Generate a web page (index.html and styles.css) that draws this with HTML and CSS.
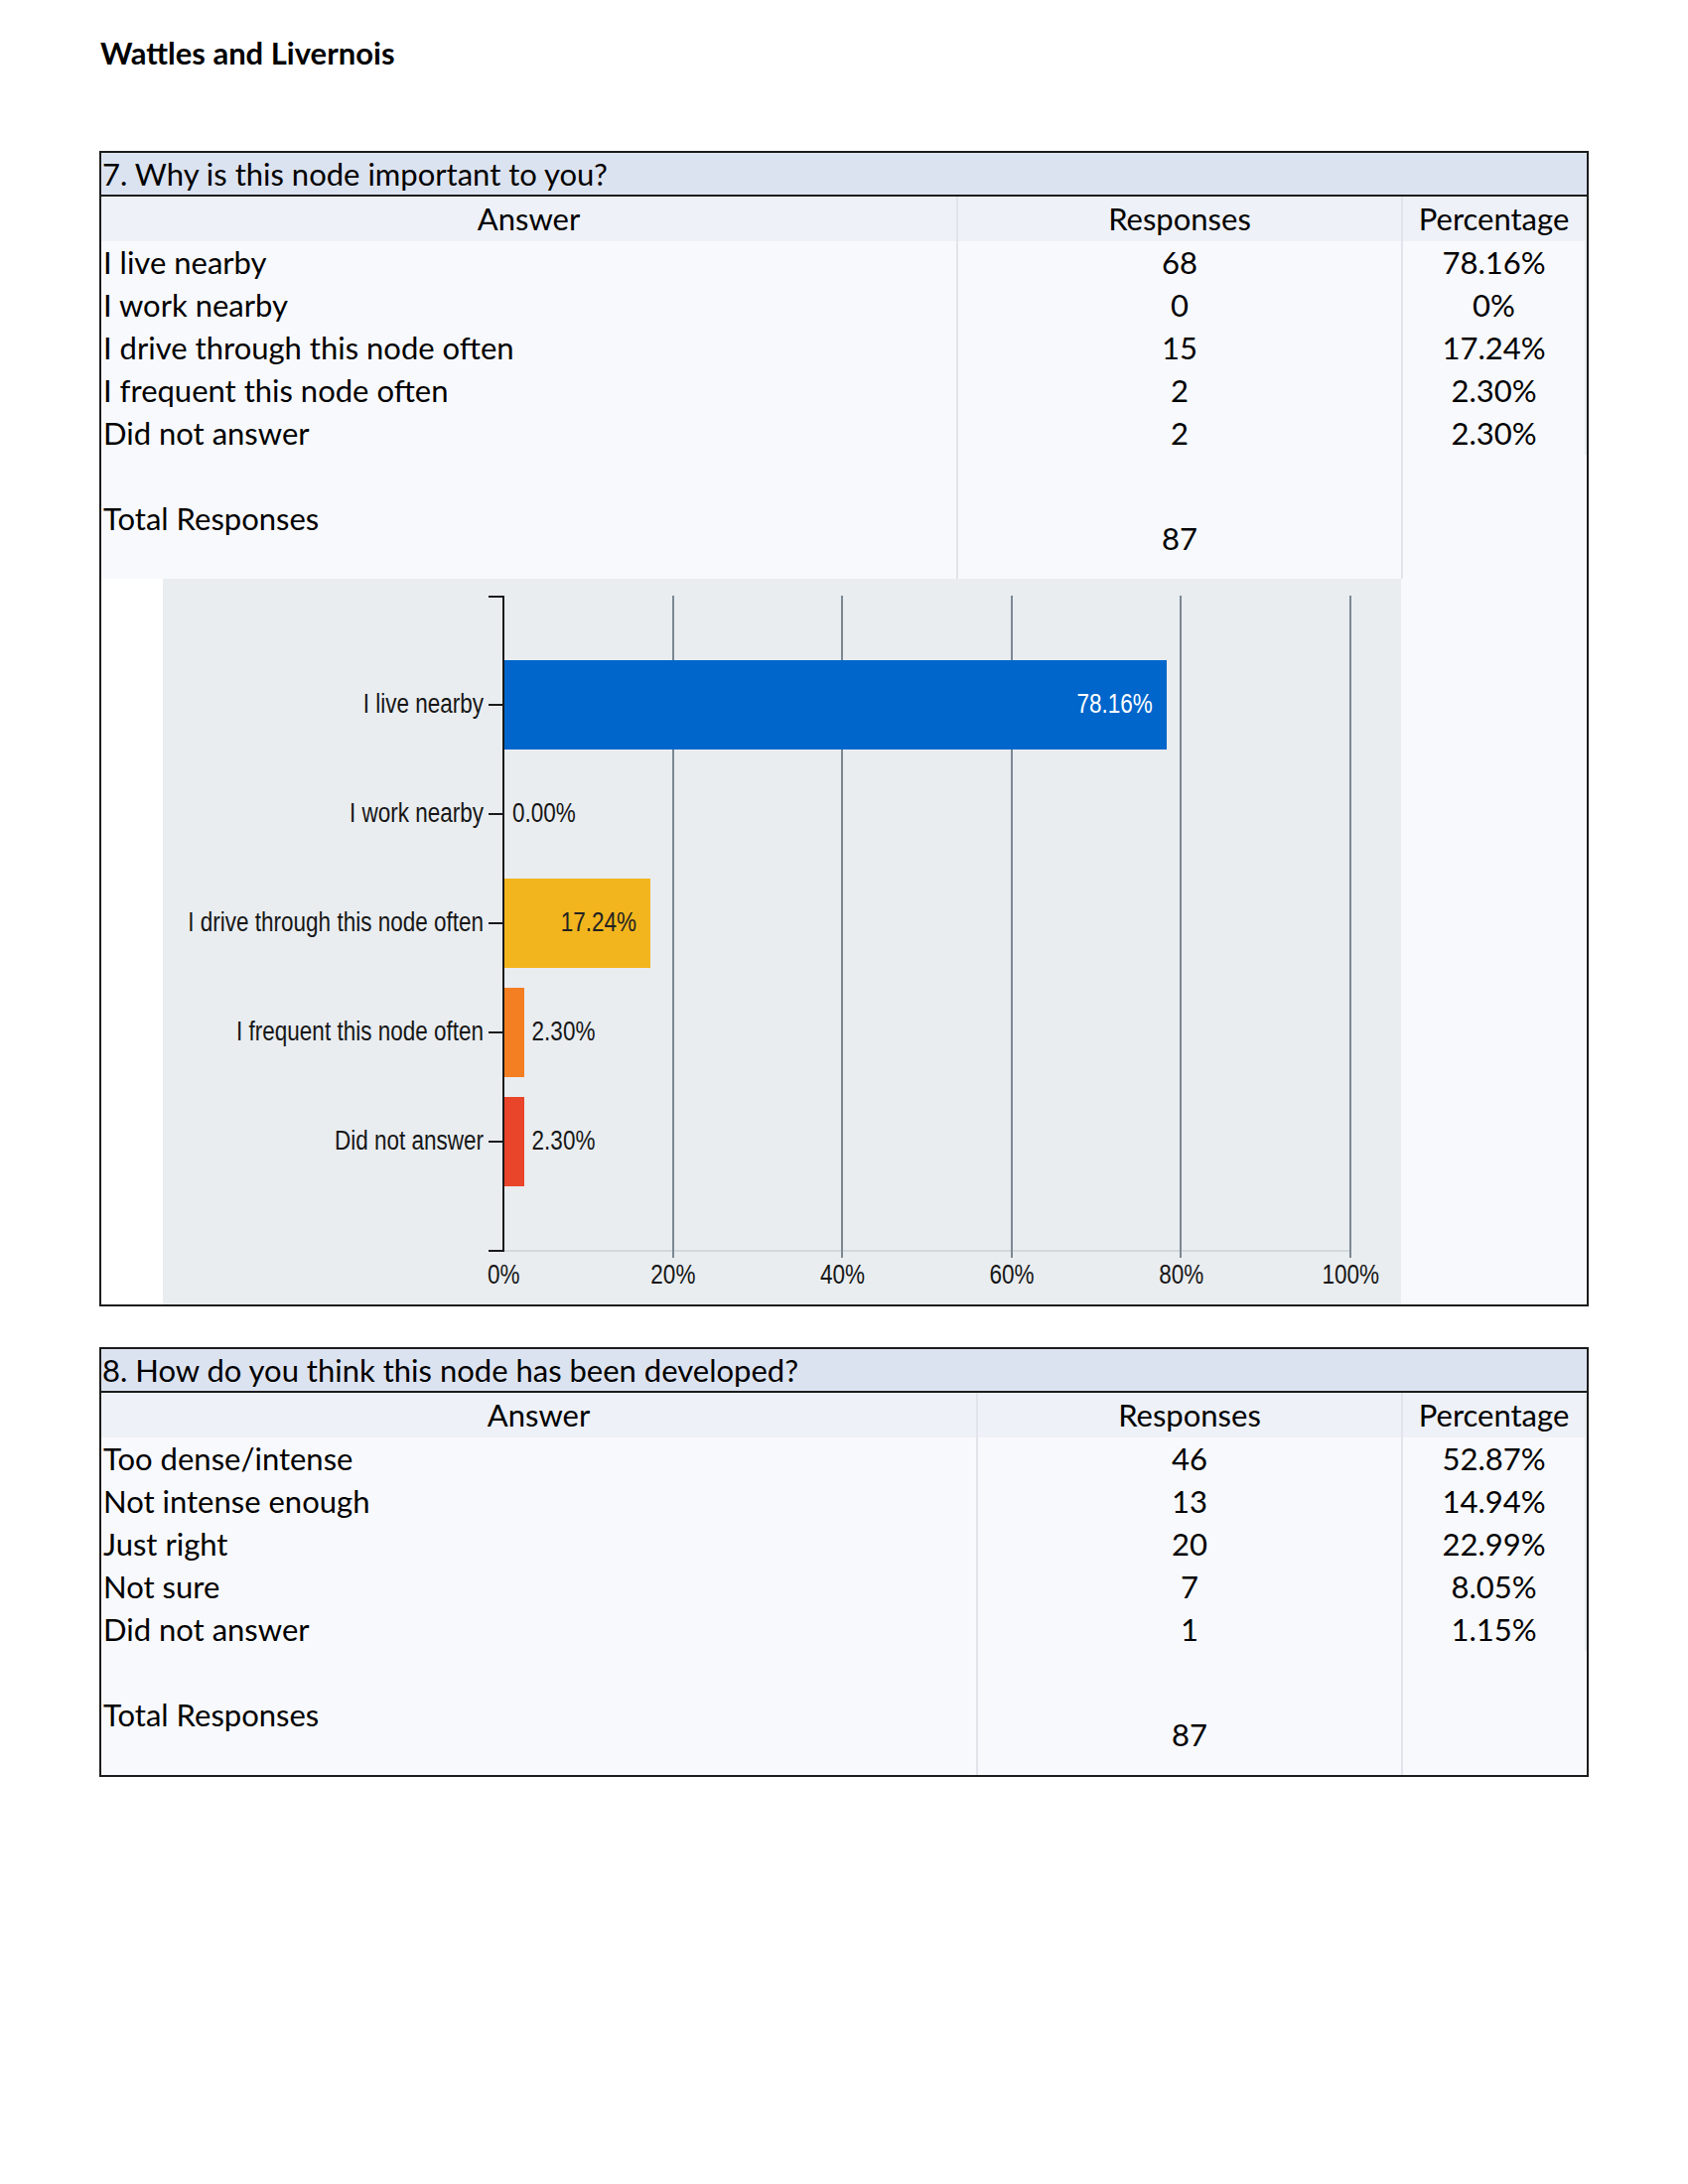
FILE: index.html
```html
<!DOCTYPE html>
<html lang="en">
<head>
<meta charset="utf-8">
<title>Wattles and Livernois</title>
<link rel="stylesheet" href="styles.css">
</head>
<body>
<main class="page">
  <h1 class="page-title">Wattles and Livernois</h1>

  <section class="survey q7">
    <div class="q-title">7. Why is this node important to you?</div>
    <div class="table">
      <div class="cell head">Answer</div>
      <div class="cell head num">Responses</div>
      <div class="cell head pct">Percentage</div>

      <div class="cell ans">I live nearby</div>
      <div class="cell num">68</div>
      <div class="cell pct">78.16%</div>

      <div class="cell ans">I work nearby</div>
      <div class="cell num">0</div>
      <div class="cell pct">0%</div>

      <div class="cell ans">I drive through this node often</div>
      <div class="cell num">15</div>
      <div class="cell pct">17.24%</div>

      <div class="cell ans">I frequent this node often</div>
      <div class="cell num">2</div>
      <div class="cell pct">2.30%</div>

      <div class="cell ans">Did not answer</div>
      <div class="cell num">2</div>
      <div class="cell pct">2.30%</div>

      <div class="cell ans blank"></div>
      <div class="cell num blank"></div>
      <div class="cell pct plain blank"></div>

      <div class="cell ans total-label">Total Responses</div>
      <div class="cell num total-num">87</div>
      <div class="cell pct plain total-pct"></div>
    </div>

    <div class="chart-row">
      <div class="chart-gap"></div>
      <div class="chart">
        <div class="cat-labels">
          <div class="cat"><span class="cat-text">I live nearby</span><span class="tick"></span></div>
          <div class="cat"><span class="cat-text">I work nearby</span><span class="tick"></span></div>
          <div class="cat"><span class="cat-text">I drive through this node often</span><span class="tick"></span></div>
          <div class="cat"><span class="cat-text">I frequent this node often</span><span class="tick"></span></div>
          <div class="cat"><span class="cat-text">Did not answer</span><span class="tick"></span></div>
        </div>
        <div class="plot">
          <div class="gridlines">
            <div class="gl"></div><div class="gl"></div><div class="gl"></div><div class="gl"></div><div class="gl"></div>
          </div>
          <div class="bars">
            <div class="bar-row"><div class="bar blue inside" style="width:78.16%"><span class="val">78.16%</span></div></div>
            <div class="bar-row"><div class="bar" style="width:0%"></div><span class="val outside">0.00%</span></div>
            <div class="bar-row"><div class="bar yellow inside" style="width:17.24%"><span class="val">17.24%</span></div></div>
            <div class="bar-row"><div class="bar orange" style="width:2.30%"></div><span class="val outside">2.30%</span></div>
            <div class="bar-row"><div class="bar red" style="width:2.30%"></div><span class="val outside">2.30%</span></div>
          </div>
        </div>
        <div class="x-labels">
          <span>0%</span><span>20%</span><span>40%</span><span>60%</span><span>80%</span><span>100%</span>
        </div>
      </div>
      <div class="chart-fill"></div>
    </div>
  </section>

  <section class="survey q8">
    <div class="q-title">8. How do you think this node has been developed?</div>
    <div class="table">
      <div class="cell head">Answer</div>
      <div class="cell head num">Responses</div>
      <div class="cell head pct">Percentage</div>

      <div class="cell ans">Too dense/intense</div>
      <div class="cell num">46</div>
      <div class="cell pct">52.87%</div>

      <div class="cell ans">Not intense enough</div>
      <div class="cell num">13</div>
      <div class="cell pct">14.94%</div>

      <div class="cell ans">Just right</div>
      <div class="cell num">20</div>
      <div class="cell pct">22.99%</div>

      <div class="cell ans">Not sure</div>
      <div class="cell num">7</div>
      <div class="cell pct">8.05%</div>

      <div class="cell ans">Did not answer</div>
      <div class="cell num">1</div>
      <div class="cell pct">1.15%</div>

      <div class="cell ans blank"></div>
      <div class="cell num blank"></div>
      <div class="cell pct plain blank"></div>

      <div class="cell ans total-label">Total Responses</div>
      <div class="cell num total-num">87</div>
      <div class="cell pct plain total-pct"></div>
    </div>
  </section>
</main>
</body>
</html>
```

FILE: styles.css
```css
* { box-sizing: border-box; }

body {
  margin: 0;
  background: #ffffff;
  color: #000000;
  font-family: Lato, "Open Sans", sans-serif;
}

.page {
  padding: 35px 0 0 100px;
  width: 1600px;
}

.page-title {
  margin: 0 0 81px 1px;
  font-size: 31px;
  line-height: 36px;
  font-weight: 700;
}

.survey {
  width: 1500px;
  border: 2px solid #1c1c1c;
  margin-bottom: 41px;
}

.q-title {
  height: 44px;
  line-height: 42px;
  padding-left: 1px;
  font-size: 31px;
  background: #dce3f0;
  border-bottom: 2px solid #1c1c1c;
  white-space: nowrap;
}

.table {
  display: grid;
  background: #f8f9fc;
}

.q7 .table { grid-template-columns: 861px 448px 187px; }
.q8 .table { grid-template-columns: 881px 428px 187px; }

.cell {
  height: 43px;
  line-height: 43px;
  font-size: 31px;
  white-space: nowrap;
}

.cell.head {
  height: 45px;
  line-height: 45px;
  text-align: center;
  background: #eef1f7;
}

.ans { padding-left: 2px; }

.num {
  text-align: center;
  border-left: 2px solid #e1e4ea;
}

.pct {
  text-align: center;
  border-left: 2px solid #e1e4ea;
  border-right: 2px solid #e9ebf0;
}

.pct.plain { border-right-color: transparent; }

.total-label,
.total-num,
.total-pct {
  height: 82px;
}

.total-num { line-height: 82px; }

/* chart */
.chart-row {
  display: flex;
  height: 731px;
}

.chart-gap {
  width: 62px;
  background: #ffffff;
}

.chart {
  width: 1247px;
  background: #e9edf0;
  display: grid;
  grid-template-columns: 342px 855px 50px;
  grid-template-rows: 17px 661px 53px;
  font-family: "Liberation Sans", Arial, sans-serif;
  font-size: 22.5px;
  color: #161616;
}

.chart-fill {
  flex: 1;
  background: #f8f9fc;
}

.cat-labels {
  grid-area: 2 / 1;
  display: flex;
  flex-direction: column;
  padding: 55px 0;
  background:
    linear-gradient(#1a1a1a, #1a1a1a) right top / 14px 2px no-repeat,
    linear-gradient(#1a1a1a, #1a1a1a) right bottom / 14px 2px no-repeat;
}

.cat {
  height: 110px;
  display: flex;
  align-items: center;
  justify-content: flex-end;
}

.cat-text,
.val,
.x-labels span {
  display: inline-block;
  transform: scaleY(1.2);
}

.cat-text { margin-right: 5px; }

.tick {
  width: 14px;
  height: 2px;
  background: #1a1a1a;
}

.plot {
  grid-area: 2 / 2;
  display: grid;
  border-left: 2px solid #1a1a1a;
  background: linear-gradient(#d2d8dd, #d2d8dd) left bottom / 100% 2px no-repeat;
}

.gridlines {
  grid-area: 1 / 1;
  display: flex;
  height: 667px;
  align-self: start;
}

.gl {
  width: 20%;
  border-right: 2px solid #7c8892;
}

.bars {
  grid-area: 1 / 1;
  display: flex;
  flex-direction: column;
  padding: 55px 0;
}

.bar-row {
  height: 110px;
  display: flex;
  align-items: center;
}

.bar {
  height: 90px;
  display: flex;
  align-items: center;
  justify-content: flex-end;
}

.bar.inside .val { margin-right: 14px; }

.blue { background: #0066cc; color: #ffffff; }
.yellow { background: #f2b51d; color: #222222; }
.orange { background: #f47f22; }
.red { background: #e8452b; }

.val.outside { margin-left: 8px; }

.x-labels {
  grid-area: 3 / 2;
  display: flex;
  width: 1024px;
  margin-left: -84px;
  padding-top: 12px;
  line-height: 26px;
}

.x-labels span {
  width: 170.6px;
  flex: none;
  text-align: center;
}
```
